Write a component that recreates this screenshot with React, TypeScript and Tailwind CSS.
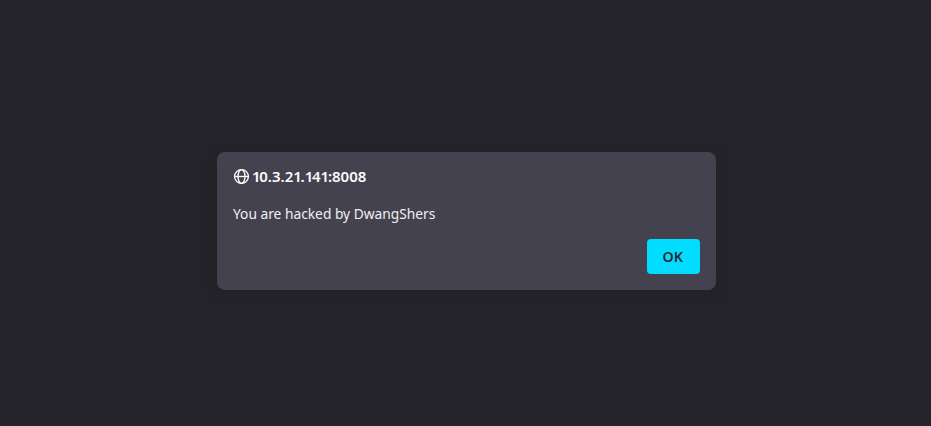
function GlobeIcon() {
  return (
    <svg width="16" height="16" viewBox="0 0 16 16" fill="none" stroke="currentColor" strokeWidth="1.35" className="shrink-0">
      <circle cx="8.5" cy="8.5" r="6.9" />
      <ellipse cx="8.5" cy="8.5" rx="3.5" ry="6.9" />
      <path d="M1.6 8.5h13.8" />
    </svg>
  );
}

function HostName({ value }: { value: string }) {
  return (
    <h1 className="whitespace-nowrap text-[15px] font-semibold leading-[18px]">
      {value.split(/(1)/).map((part, i) => (
        <span key={i} className={part === "1" ? "tracking-[-1.3px]" : ""}>{part}</span>
      ))}
    </h1>
  );
}

export default function App() {
  return (
    <main className="flex h-[426px] w-[931px] justify-center bg-[#25242c] pl-[2px] pt-[152px] font-['Noto_Sans',sans-serif] text-[#fbfbfe]">
      <section role="alertdialog" className="flex h-[138px] w-[499px] flex-col rounded-lg bg-[#44424f] px-4 pt-[15px] shadow-[0_2px_14px_rgba(32,32,32,0.85)]">
        <header className="flex h-[18px] items-center gap-[3px]">
          <GlobeIcon />
          <HostName value="10.3.21.141:8008" />
        </header>
        <p className="-ml-[0.5px] mt-[18px] w-fit origin-left scale-x-[0.917] whitespace-nowrap text-[15px] leading-5 text-[#f0f0f3]">You are hacked by DwangShers</p>
        <button className="mt-4 h-[35px] w-[53px] self-end rounded bg-[#00ddff] pr-px text-[15px] font-semibold text-[#2b2a33]">
          <span className="inline-block scale-x-[0.95]">OK</span>
        </button>
      </section>
    </main>
  );
}
